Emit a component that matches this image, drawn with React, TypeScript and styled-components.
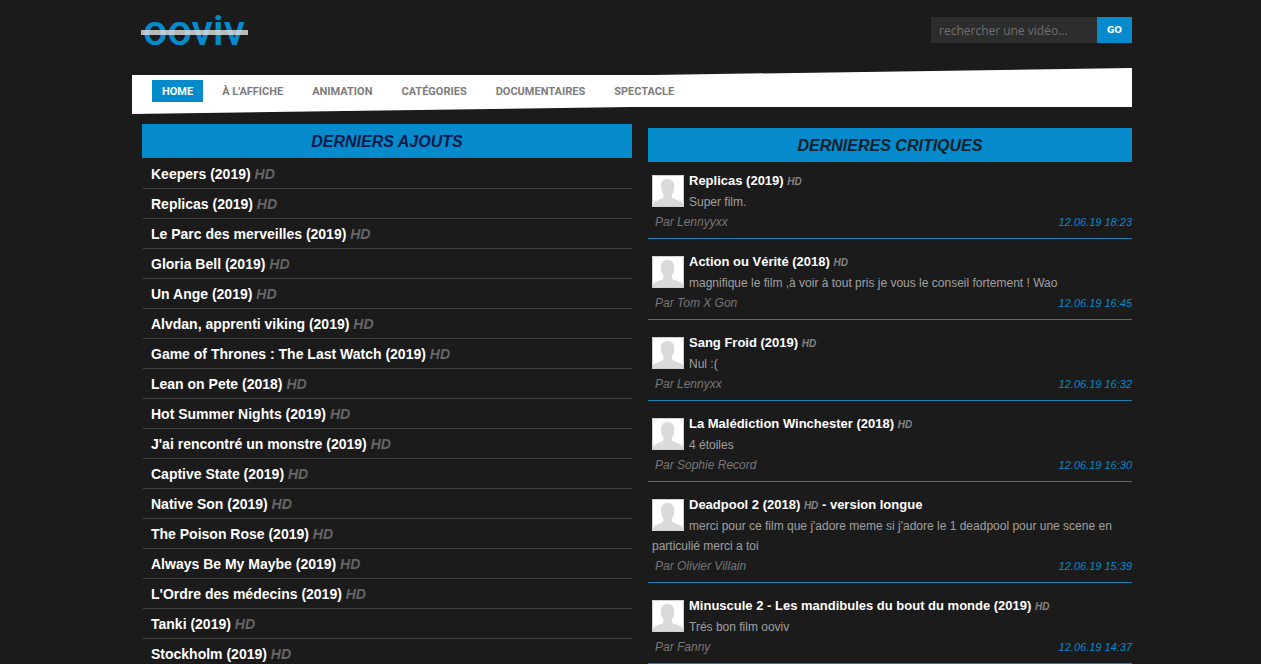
import React from "react";
import styled, { createGlobalStyle } from "styled-components";

const GlobalStyle = createGlobalStyle`
  * { box-sizing: border-box; }
  body {
    margin: 0;
    background: #1b1b1b;
    font-family: "Liberation Sans", Arial, sans-serif;
    color: #a0a0a0;
  }
  a { color: inherit; text-decoration: none; }
`;

const Page = styled.div`
  height: 100vh;
  overflow: hidden;
  padding-left: 3px;
`;

const Container = styled.div`
  max-width: 1000px;
  margin: 0 auto;
`;

const Header = styled.header`
  display: flex;
  justify-content: space-between;
  align-items: flex-start;
  height: 68px;
  padding-left: 9px;
`;

const Logo = styled.a`
  position: relative;
  padding: 0 3px 0 2px;
  margin-top: 4px;
  font: 500 43px/52px Roboto, sans-serif;
  && { color: #058acb; }
  &::after {
    content: "";
    position: absolute;
    left: 0;
    right: 0;
    top: 26px;
    height: 5px;
    background: rgba(225, 225, 225, 0.8);
  }
`;

const Search = styled.form`
  display: flex;
  height: 26px;
  margin-top: 17px;
`;

const SearchInput = styled.input`
  width: 166px;
  padding: 0 8px;
  border: 0;
  background: #2d2d2d;
  color: #777;
  font: 12px "Open Sans", "Noto Sans", sans-serif;
  &::placeholder { color: #707070; opacity: 1; }
`;

const SearchButton = styled.button`
  width: 35px;
  padding: 0;
  border: 0;
  background: #058acb;
  color: #fff;
  font: bold 9px "DejaVu Sans", sans-serif;
`;

const Nav = styled.nav`
  display: flex;
  align-items: flex-start;
  gap: 9px;
  height: 46px;
  padding: 12px 20px 0;
  background: #fff;
  clip-path: polygon(0 7px, 52% 7px, 100% 0, 100% 39px, 50% 39px, 0 100%);
`;

const NavLink = styled.a<{ $active?: boolean }>`
  padding: 1px 10px 0;
  font: 700 11px/21px Roboto, sans-serif;
  background: ${(p) => (p.$active ? "#058acb" : "transparent")};
  && { color: ${(p) => (p.$active ? "#fff" : "#7c7c7c")}; }
`;

const Columns = styled.main`
  display: grid;
  grid-template-columns: 490fr 484fr;
  column-gap: 16px;
  align-items: start;
  padding: 10px 0 0 10px;
`;

const Column = styled.section<{ $lowered?: boolean }>`
  padding-top: ${(p) => (p.$lowered ? "4px" : "0")};
`;

const Title = styled.h2<{ $ink: string }>`
  margin: 0;
  padding-top: 2px;
  background: #058acb;
  color: ${(p) => p.$ink};
  text-align: center;
  font: italic bold 16px/32px "Liberation Sans", Arial, sans-serif;
`;

const FilmList = styled.ul`
  list-style: none;
  margin: 0;
  padding: 1px 0 0 1px;
`;

const FilmRow = styled.li`
  height: 30px;
  padding-left: 8px;
  border-bottom: 1px solid #444;
  color: #fff;
  font-weight: bold;
  font-size: 14px;
  line-height: 30px;
`;

const Quality = styled.em<{ $small?: boolean }>`
  color: ${(p) => (p.$small ? "#858585" : "#666")};
  font-size: ${(p) => (p.$small ? "10px" : "14px")};
  line-height: 1;
`;

const Review = styled.article<{ $first?: boolean }>`
  padding: ${(p) => (p.$first ? "8px" : "12px")} 0 5px 4px;
  border-bottom: 1px solid #1c7fb0;
`;

const Avatar = styled.svg`
  float: left;
  width: 32px;
  height: 32px;
  margin: 5px 5px 0 0;
`;

const ReviewTitle = styled.h3`
  margin: 0;
  color: #fff;
  font-size: 13px;
  line-height: 22px;
`;

const ReviewText = styled.p`
  margin: 0;
  font-size: 12px;
  line-height: 20px;
`;

const ReviewMeta = styled.footer`
  display: flex;
  justify-content: space-between;
  clear: both;
  padding-left: 3px;
  color: #777;
  font-style: italic;
  font-size: 12px;
  line-height: 21px;
`;

const ReviewDate = styled.time`
  color: #058acb;
  font-size: 11px;
  line-height: 20px;
`;

const links = ["HOME", "À L'AFFICHE", "ANIMATION", "CATÉGORIES", "DOCUMENTAIRES", "SPECTACLE"];

const films = [
  "Keepers (2019)",
  "Replicas (2019)",
  "Le Parc des merveilles (2019)",
  "Gloria Bell (2019)",
  "Un Ange (2019)",
  "Alvdan, apprenti viking (2019)",
  "Game of Thrones : The Last Watch (2019)",
  "Lean on Pete (2018)",
  "Hot Summer Nights (2019)",
  "J'ai rencontré un monstre (2019)",
  "Captive State (2019)",
  "Native Son (2019)",
  "The Poison Rose (2019)",
  "Always Be My Maybe (2019)",
  "L'Ordre des médecins (2019)",
  "Tanki (2019)",
  "Stockholm (2019)",
];

interface ReviewData {
  film: string;
  note?: string;
  text: string;
  author: string;
  date: string;
}

const reviews: ReviewData[] = [
  { film: "Replicas (2019)", text: "Super film.", author: "Lennyyxx", date: "12.06.19 18:23" },
  {
    film: "Action ou Vérité (2018)",
    text: "magnifique le film ,à voir à tout pris je vous le conseil fortement ! Wao",
    author: "Tom X Gon",
    date: "12.06.19 16:45",
  },
  { film: "Sang Froid (2019)", text: "Nul :(", author: "Lennyxx", date: "12.06.19 16:32" },
  { film: "La Malédiction Winchester (2018)", text: "4 étoiles", author: "Sophie Record", date: "12.06.19 16:30" },
  {
    film: "Deadpool 2 (2018)",
    note: " - version longue",
    text: "merci pour ce film que j'adore meme si j'adore le 1 deadpool pour une scene en particulié merci a toi",
    author: "Olivier Villain",
    date: "12.06.19 15:39",
  },
  {
    film: "Minuscule 2 - Les mandibules du bout du monde (2019)",
    text: "Trés bon film ooviv",
    author: "Fanny",
    date: "12.06.19 14:37",
  },
];

function Silhouette() {
  return (
    <Avatar viewBox="0 0 32 32" aria-hidden="true">
      <rect width="32" height="32" fill="#d0d0d0" />
      <rect x="1" y="1" width="30" height="30" fill="#fff" />
      <path
        d="M15.500 4C11 4 8.800 7 9 11.500C9.100 15 10 18 11.500 19.500V22C11 24 5 25 2.500 27L1 29V31H31V29L29.500 27C27 25 20.500 24 20 22V19.500C21.500 18 22.200 15 22.300 11.500C22.400 7 20 4 15.500 4Z"
        fill="#dadada"
      />
    </Avatar>
  );
}

export default function App() {
  return (
    <Page>
      <GlobalStyle />
      <Container>
        <Header>
          <Logo href="#">ooviv</Logo>
          <Search onSubmit={(e) => e.preventDefault()}>
            <SearchInput type="text" aria-label="rechercher une vidéo" placeholder="rechercher une vidéo..." />
            <SearchButton type="submit">GO</SearchButton>
          </Search>
        </Header>
        <Nav>
          {links.map((label, i) => (
            <NavLink key={label} href="#" $active={i === 0}>
              {label}
            </NavLink>
          ))}
        </Nav>
        <Columns>
          <Column>
            <Title $ink="#0b1a48">DERNIERS AJOUTS</Title>
            <FilmList>
              {films.map((film) => (
                <FilmRow key={film}>
                  <a href="#">{film}</a> <Quality>HD</Quality>
                </FilmRow>
              ))}
            </FilmList>
          </Column>
          <Column $lowered>
            <Title $ink="#0e2029">DERNIERES CRITIQUES</Title>
            {reviews.map((r, i) => (
              <Review key={r.film} $first={i === 0}>
                <Silhouette />
                <ReviewTitle>
                  <a href="#">
                    {r.film} <Quality $small>HD</Quality>
                    {r.note}
                  </a>
                </ReviewTitle>
                <ReviewText>{r.text}</ReviewText>
                <ReviewMeta>
                  <span>Par {r.author}</span>
                  <ReviewDate>{r.date}</ReviewDate>
                </ReviewMeta>
              </Review>
            ))}
          </Column>
        </Columns>
      </Container>
    </Page>
  );
}
